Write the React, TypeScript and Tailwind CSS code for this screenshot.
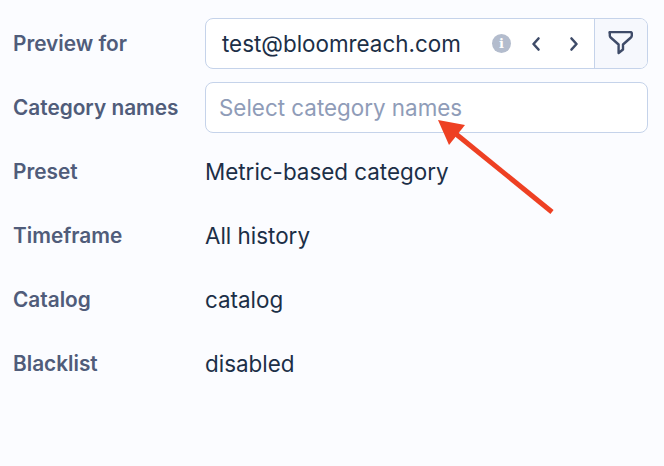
const labelClass = "w-[192px] shrink-0 text-[20.8px] font-semibold text-[#505c7a]";

const rows = [
  { label: "Preset", value: "Metric-based category" },
  { label: "Timeframe", value: "All history" },
  { label: "Catalog", value: "catalog" },
  { label: "Blacklist", value: "disabled" },
];

const App = () => {
  return (
    <div className="relative h-[466px] w-[664px] overflow-hidden bg-[#fbfcff] pl-[13px] pr-[16px] pt-[18px] font-['Inter',sans-serif] text-[#1c2f47]">
      <div className="flex h-[51px] items-center">
        <div className={labelClass}>Preview for</div>
        <div className="flex h-full flex-1 overflow-hidden rounded-[8px] border border-[#c5d3ea] bg-white">
          <div className="flex flex-1 items-center pl-[16px] text-[22.4px]">
            <span className="flex-1">test@bloomreach.com</span>
            <span className="mr-[19px] flex h-[19px] w-[19px] items-center justify-center rounded-full bg-[#b3bccd] font-['DejaVu_Serif',serif] text-[13px] font-bold text-white">
              i
            </span>
            <svg width="12" height="16" viewBox="0 0 12 16" fill="none" stroke="#3f4c69" strokeWidth="2.6" strokeLinecap="round" strokeLinejoin="round">
              <path d="M8.5 2.5 3.5 8l5 5.5" />
            </svg>
            <svg className="ml-[26px] mr-[14px]" width="12" height="16" viewBox="0 0 12 16" fill="none" stroke="#3f4c69" strokeWidth="2.6" strokeLinecap="round" strokeLinejoin="round">
              <path d="M3.5 2.5 8.5 8l-5 5.5" />
            </svg>
          </div>
          <div className="flex w-[53px] items-center justify-center border-l border-[#c5d3ea] bg-[#f6f8fd]">
            <svg width="28" height="26" viewBox="0 0 28 26" fill="none" stroke="#3f4c69" strokeWidth="2.4" strokeLinejoin="round">
              <path d="M2.700 1h20.600a1.500 1.500 0 0 1 1.500 1.500v2c0 .8-.3 1.500-.9 2l-7.900 7v5l-4.400 3.500v-8.500l-7.900-7c-.6-.5-.9-1.200-.9-2v-2A1.500 1.500 0 0 1 2.700 1z" />
            </svg>
          </div>
        </div>
      </div>
      <div className="mt-[13px] flex h-[51px] items-center">
        <div className={labelClass}>Category names</div>
        <div className="flex h-full flex-1 items-center rounded-[8px] border border-[#c5d3ea] bg-white pl-[13px] text-[22.4px] text-[#8f9cb8]">
          Select category names
        </div>
      </div>
      {rows.map((row) => (
        <div key={row.label} className="mt-[13px] flex h-[51px] items-center">
          <div className={labelClass}>{row.label}</div>
          <div className="text-[22.4px]">{row.value}</div>
        </div>
      ))}
      <svg className="absolute left-0 top-0" width="664" height="466" viewBox="0 0 664 466" fill="none">
        <path d="M552 212 456 134" stroke="#ee4023" strokeWidth="5" />
        <path d="M438 120 465 125 449 145z" fill="#ee4023" />
      </svg>
    </div>
  );
};

export default App;
